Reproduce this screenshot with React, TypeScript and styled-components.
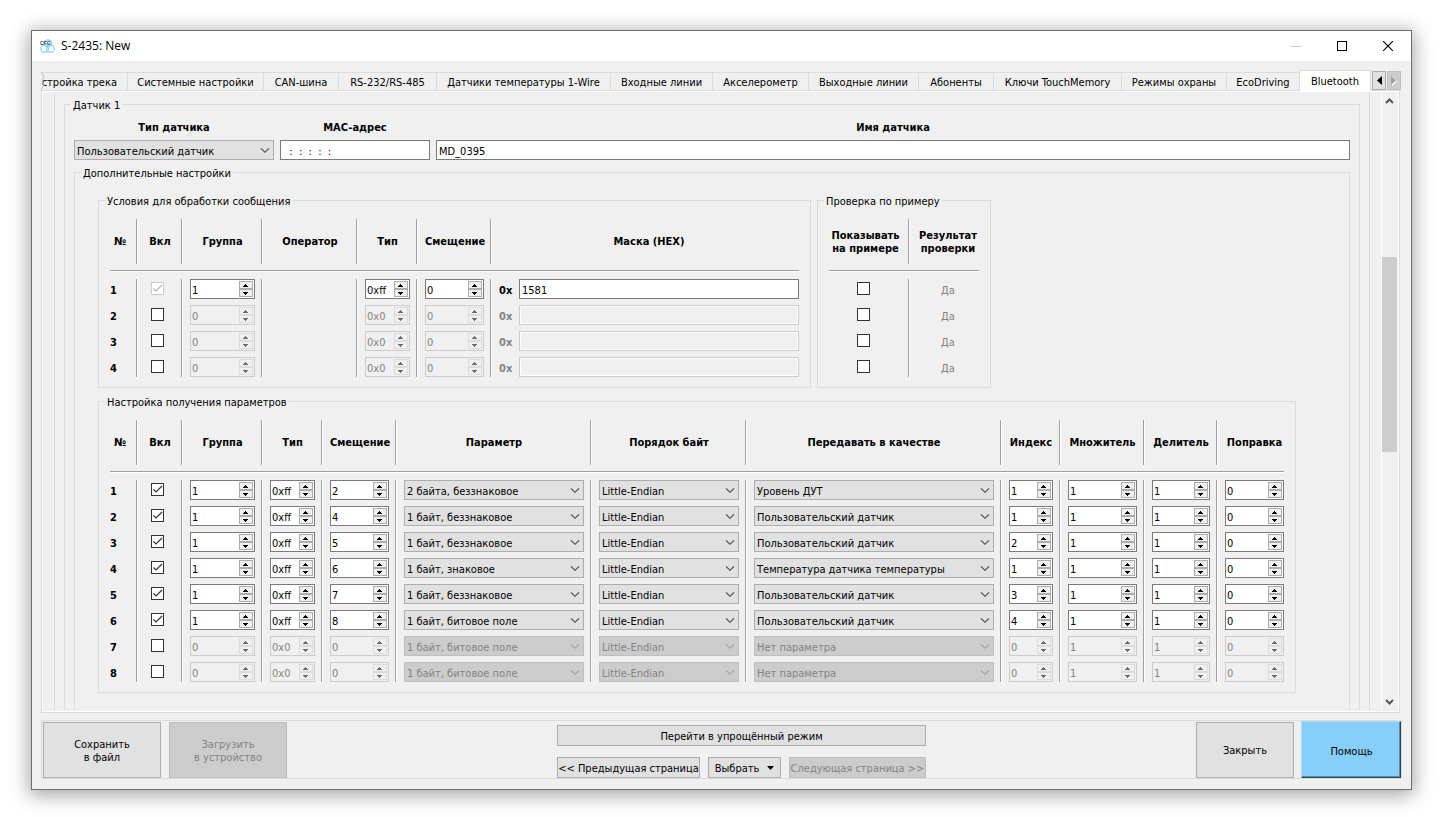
import React from 'react';
import styled, { createGlobalStyle, css } from 'styled-components';

const GlobalStyle = createGlobalStyle`
  *, *::before, *::after { box-sizing: border-box; }
  body {
    margin: 0;
    background: #fff;
    color: #000;
    font-family: "DejaVu Sans Condensed", "Noto Sans", sans-serif;
    font-size: 11px;
    line-height: 13px;
  }
  button, input, select { font: inherit; color: inherit; margin: 0; border-radius: 0; }
`;

const color = {
  face: '#f0f0f0',
  frame: '#dcdcdc',
  rule: '#a0a0a0',
  disabledText: '#838383',
};

/* ---------- window ---------- */

const Desktop = styled.div`
  min-height: 100vh;
  padding: 30px 28px 27px 31px;
  display: flex;
`;

const Window = styled.main`
  flex: 1;
  min-width: 0;
  display: flex;
  flex-direction: column;
  border: 1px solid #6e6e6e;
  background: ${color.face};
  box-shadow: 0 3px 18px 2px rgba(0, 0, 0, 0.36);
`;

const TitleBar = styled.header`
  height: 30px;
  display: flex;
  align-items: center;
  padding-left: 8px;
  background: #fff;
`;

const Title = styled.h1`
  margin: 0 0 0 6px;
  flex: 1;
  font: 12px/16px "Open Sans", "Noto Sans", sans-serif;
`;

const CaptionButton = styled.button`
  width: 46px;
  height: 30px;
  padding: 0;
  border: 0;
  background: none;
  display: grid;
  place-items: center;
`;

const Body = styled.div`
  flex: 1;
  min-height: 0;
  display: flex;
  flex-direction: column;
  padding: 9px 9px 10px;
`;

/* ---------- tabs ---------- */

const TabRow = styled.div`
  display: flex;
  height: 20px;
`;

const TabList = styled.div`
  position: relative;
  flex: 1;
  min-width: 0;
  display: flex;
  align-items: flex-end;
`;

const Tab = styled.button<{ $weight: number; $active?: boolean; $cut?: boolean }>`
  flex: ${p => p.$weight} ${p => p.$weight} ${p => p.$weight}px;
  min-width: 0;
  height: 18px;
  padding: 2px 0 0;
  white-space: nowrap;
  text-align: center;
  border: solid ${color.frame};
  border-width: 1px 0 0 1px;
  background: ${color.face};
  ${p => p.$cut && css`
    display: flex;
    justify-content: flex-end;
    align-items: center;
    padding-right: 10px;
    border-left: 0;
  `}
  ${p => p.$active && css`
    height: 21px;
    margin-bottom: -1px;
    padding-top: 1px;
    border-right-width: 1px;
    background: #fff;
    z-index: 1;
  `}
`;

const TornEdge = styled.svg`
  position: absolute;
  left: 0;
  bottom: 0;
`;

const TabScroll = styled.div`
  display: flex;
  gap: 1px;
  padding: 1px 1px 0;
`;

const ArrowButton = styled.button`
  width: 14px;
  height: 19px;
  padding: 0;
  display: grid;
  place-items: center;
  border: 1px solid #adadad;
  background: #e1e1e1;
  &:disabled { border-color: #bfbfbf; background: #ccc; }
`;

/* ---------- scrolled page ---------- */

const Pane = styled.section`
  flex: 1;
  display: flex;
  margin-right: 2px;
  border: 1px solid ${color.frame};
  box-shadow: inset 0 0 0 1px #fff;
  padding: 1px 1px 2px 1px;
`;

const PageView = styled.div`
  flex: 1;
  min-width: 0;
  display: flex;
  padding: 0 11px;
  overflow: hidden;
`;

const PageFrame = styled.div`
  flex: 1;
  min-width: 0;
  display: flex;
  padding: 5px 9px 0;
  border: solid ${color.frame};
  border-width: 0 1px;
`;

const ScrollBar = styled.div`
  width: 17px;
  display: flex;
  flex-direction: column;
  align-items: center;
  padding-right: 1px;
  border-left: 1px solid #fff;
`;

const ScrollButton = styled.button`
  width: 15px;
  height: 17px;
  padding: 0;
  border: 0;
  background: ${color.face};
  display: grid;
  place-items: center;
`;

const ScrollTrack = styled.div`
  flex: 1;
  width: 15px;
  display: grid;
  grid-template-rows: 148fr 195fr 241fr;
`;

const ScrollThumb = styled.div`
  grid-row: 2;
  background: #cdcdcd;
`;

/* ---------- group boxes ---------- */

const GroupBox = styled.fieldset<{ $open?: boolean }>`
  margin: 0;
  padding: 0;
  min-width: 0;
  border: 1px solid ${color.frame};
  ${p => p.$open && css`
    flex: 1;
    border-bottom: 0;
  `}
`;

const Legend = styled.legend`
  margin-left: 6px;
  padding: 2px 2px 0;
`;

const SensorContent = styled.div`
  height: 100%;
  display: flex;
  flex-direction: column;
  padding: 9px 9px 0;
`;

const ExtraContent = styled.div`
  display: flex;
  flex-direction: column;
  align-items: flex-start;
  gap: 6px;
  padding: 13px 23px 16px;
`;

const GroupRow = styled.div`
  display: flex;
  gap: 6px;
`;

const TableContent = styled.div`
  padding: 11px 11px 10px;
`;

const FieldRow = styled.div`
  display: grid;
  grid-template-columns: 200px 150px 1fr;
  gap: 6px;
  margin-bottom: 5px;
`;

const Field = styled.label`
  display: flex;
  flex-direction: column;
  gap: 6px;
`;

const FieldLabel = styled.span`
  font-weight: bold;
  text-align: center;
`;

/* ---------- controls ---------- */

const TextBox = styled.input`
  width: 100%;
  height: 20px;
  padding: 2px 2px 0;
  border: 1px solid #7a7a7a;
  background: #fff;
  white-space: pre;
  outline: 0;
  &:disabled {
    border-color: #ccc;
    background: ${color.face};
    box-shadow: inset 0 0 0 1px #fff;
  }
`;

const ComboFrame = styled.span`
  display: grid;
  align-items: center;
  justify-items: end;
  & > * { grid-area: 1 / 1; }
  & > svg { margin-right: 4px; pointer-events: none; }
`;

const ComboSelect = styled.select`
  appearance: none;
  width: 100%;
  height: 20px;
  padding: 2px 18px 0 2px;
  border: 1px solid #adadad;
  background: #e1e1e1;
  outline: 0;
  &:disabled {
    border-color: #bfbfbf;
    background: #ccc;
    color: ${color.disabledText};
    opacity: 1;
  }
`;

const SpinFrame = styled.span<{ $off?: boolean }>`
  display: flex;
  height: 20px;
  padding: 1px;
  border: 1px solid ${p => (p.$off ? '#ccc' : '#7a7a7a')};
  background: ${p => (p.$off ? color.face : '#fff')};
  color: ${p => (p.$off ? color.disabledText : '#000')};
`;

const SpinInput = styled.input`
  flex: 1;
  width: 0;
  min-width: 0;
  padding: 2px 0 0;
  border: 0;
  background: none;
  outline: 0;
`;

const SpinButtons = styled.span`
  width: 14px;
  display: grid;
  grid-template-rows: 8px 8px;
`;

const SpinButton = styled.button<{ $off?: boolean }>`
  padding: 0;
  display: grid;
  place-items: center;
  border: 1px solid ${p => (p.$off ? '#dcdcdc' : '#acacac')};
  background: ${color.face};
  color: ${p => (p.$off ? '#6d6d6d' : '#000')};
`;

const CheckBox = styled.input`
  appearance: none;
  display: block;
  width: 13px;
  height: 13px;
  border: 1px solid #333;
  background: #fff;
  &:disabled { border-color: #ccc; }
`;

const CheckFrame = styled.span`
  display: grid;
  width: 13px;
  height: 13px;
  & > * { grid-area: 1 / 1; }
  & > svg { pointer-events: none; }
`;

/* ---------- settings tables ---------- */

const Grid = styled.table`
  border-collapse: separate;
  border-spacing: 0;
  table-layout: fixed;
  width: min-content;
`;

const cell = css`
  padding: 0 6px 0 8px;
  border-left: 1px solid ${color.rule};
  box-shadow: inset 1px 0 #fff;
  &:first-child { border-left: 0; box-shadow: none; padding-left: 0; }
  &:last-child { padding-right: 0; }
`;

const HeadCell = styled.th`
  ${cell}
  height: 45px;
  text-align: center;
  vertical-align: middle;
  white-space: pre;
`;

const RuleCell = styled.td`
  height: 15px;
  padding: 6px 0 7px;
`;

const Rule = styled.div`
  height: 2px;
  border-top: 1px solid ${color.rule};
  border-bottom: 1px solid #fff;
`;

const BodyRow = styled.tr`
  height: 26px;
  &:last-child { height: 20px; }
`;

const Cell = styled.td`
  ${cell}
  vertical-align: top;
`;

const CellBox = styled.div<{ $align?: 'start' | 'center' }>`
  height: 20px;
  display: flex;
  align-items: center;
  justify-content: ${p => p.$align ?? 'stretch'};
  gap: 6px;
`;

const CheckCellBox = styled(CellBox)`
  padding: 0 10px 1px 6px;
`;

const RowNumber = styled.span`
  padding-top: 2px;
  font-weight: bold;
`;

const Prefix = styled.b<{ $off?: boolean }>`
  flex: 0 0 14px;
  padding-top: 2px;
  color: ${p => (p.$off ? color.disabledText : '#000')};
`;

const Verdict = styled.span`
  padding-top: 2px;
  color: ${color.disabledText};
`;

/* ---------- footer ---------- */

const Footer = styled.footer`
  display: flex;
  justify-content: space-between;
  align-items: flex-end;
  height: 59px;
  margin-top: 7px;
  padding-left: 1px;
  border: 1px solid ${color.frame};
`;

const ButtonRow = styled.div`
  display: flex;
  align-items: flex-end;
  gap: 8px;
`;

const EndButtons = styled(ButtonRow)`
  gap: 7px;
`;

const NavBlock = styled.nav`
  display: flex;
  flex-direction: column;
  gap: 11px;
`;

const PushButton = styled.button<{ $width?: number; $tall?: boolean }>`
  width: ${p => (p.$width ? `${p.$width}px` : 'auto')};
  height: ${p => (p.$tall ? 56 : 21)}px;
  padding: 1px 0 0;
  display: flex;
  align-items: center;
  justify-content: center;
  gap: 8px;
  white-space: pre;
  text-align: center;
  border: 1px solid #adadad;
  background: #e1e1e1;
  &:disabled { border-color: #bfbfbf; background: #ccc; color: ${color.disabledText}; }
`;

const HelpButton = styled.button`
  width: 100px;
  height: 57px;
  padding: 3px 0 0 1px;
  border: 1px solid;
  border-color: #a9dcfb #27465a #27465a #a9dcfb;
  background: #87cefa;
  box-shadow: inset -1px -1px #5b8ba9;
`;

/* ---------- glyphs ---------- */

const AppIcon = () => (
  <svg width="15" height="15" viewBox="0 0 15 15" aria-hidden="true">
    <g fill="none" stroke="#8ccdf3" strokeWidth="1.2">
      <circle cx="8" cy="4.4" r="3.6" fill="#eaf6fd" />
      <circle cx="4.6" cy="9.6" r="3.8" />
      <circle cx="10.4" cy="9.6" r="3.8" />
    </g>
    <text x="0" y="6" fontSize="5" fontWeight="bold" fontFamily="Liberation Sans, sans-serif" fill="#444">CFG</text>
  </svg>
);

const Chevron = ({ off }: { off?: boolean }) => (
  <svg width="10" height="8" viewBox="0 0 10 8" aria-hidden="true">
    <path d="M1 2.3 5 6.3 9 2.3" fill="none" stroke={off ? '#a3a3a3' : '#444'} strokeWidth="1.1" />
  </svg>
);

const SpinArrow = ({ down }: { down?: boolean }) => (
  <svg width="6" height="3" viewBox="0 0 6 3" shapeRendering="crispEdges" aria-hidden="true">
    <path d={down ? 'M0 0h5v1H4v1H3v1H2V2H1V1H0z' : 'M0 3h5V2H4V1H3V0H2v1H1v1H0z'} fill="currentColor" />
  </svg>
);

const ScrollArrow = ({ down }: { down?: boolean }) => (
  <svg width="9" height="6" viewBox="0 0 9 6" aria-hidden="true">
    <path d={down ? 'M1 1 4.5 4.5 8 1' : 'M1 5 4.5 1.5 8 5'} fill="none" stroke="#555" strokeWidth="2" />
  </svg>
);

/* ---------- composed controls ---------- */

function Spin({ value, off, label }: { value: string; off?: boolean; label: string }) {
  return (
    <SpinFrame $off={off}>
      <SpinInput type="text" defaultValue={value} disabled={off} aria-label={label} />
      <SpinButtons>
        <SpinButton $off={off} disabled={off} aria-label={`${label} +`}><SpinArrow /></SpinButton>
        <SpinButton $off={off} disabled={off} aria-label={`${label} −`}><SpinArrow down /></SpinButton>
      </SpinButtons>
    </SpinFrame>
  );
}

function Combo({ value, off, label }: { value: string; off?: boolean; label: string }) {
  return (
    <ComboFrame>
      <ComboSelect defaultValue={value} disabled={off} aria-label={label}>
        <option>{value}</option>
      </ComboSelect>
      <Chevron off={off} />
    </ComboFrame>
  );
}

function Check({ checked, off, label }: { checked?: boolean; off?: boolean; label: string }) {
  const [on, setOn] = React.useState(!!checked);
  return (
    <CheckFrame>
      <CheckBox type="checkbox" checked={on} disabled={off} aria-label={label} onChange={e => setOn(e.target.checked)} />
      {on && (
        <svg width="13" height="13" viewBox="0 0 13 13" aria-hidden="true">
          <path d="M2.5 6.5 5 9 11 3" fill="none" stroke={off ? '#b4b4b4' : '#333'} strokeWidth="1.2" />
        </svg>
      )}
    </CheckFrame>
  );
}

function TableHead({ columns }: { columns: [string, number][] }) {
  return (
    <>
      <colgroup>{columns.map(([name, width]) => <col key={name} width={width} />)}</colgroup>
      <thead>
        <tr>{columns.map(([name]) => <HeadCell key={name} scope="col">{name}</HeadCell>)}</tr>
        <tr aria-hidden="true"><RuleCell colSpan={columns.length}><Rule /></RuleCell></tr>
      </thead>
    </>
  );
}

/* ---------- data ---------- */

const tabs: [string, number][] = [
  ['стройка трека', 86], ['Системные настройки', 136], ['CAN-шина', 75], ['RS-232/RS-485', 98],
  ['Датчики температуры 1-Wire', 174], ['Входные линии', 102], ['Акселерометр', 96],
  ['Выходные линии', 110], ['Абоненты', 75], ['Ключи TouchMemory', 128], ['Режимы охраны', 105],
  ['EcoDriving', 73], ['Bluetooth', 72],
];

const conditionColumns: [string, number][] = [
  ['№', 26], ['Вкл', 45], ['Группа', 80], ['Оператор', 95], ['Тип', 60], ['Смещение', 74], ['Маска (HEX)', 309],
];

const conditions = [
  { group: '1', type: '0xff', mask: '1581', first: true },
  { group: '0', type: '0x0', mask: '' },
  { group: '0', type: '0x0', mask: '' },
  { group: '0', type: '0x0', mask: '' },
];

const probeColumns: [string, number][] = [['Показывать\nна примере', 79], ['Результат\nпроверки', 71]];

const paramColumns: [string, number][] = [
  ['№', 26], ['Вкл', 45], ['Группа', 80], ['Тип', 60], ['Смещение', 74], ['Параметр', 195],
  ['Порядок байт', 155], ['Передавать в качестве', 255], ['Индекс', 59], ['Множитель', 84],
  ['Делитель', 73], ['Поправка', 68],
];

const params = [
  { offset: '2', kind: '2 байта, беззнаковое', target: 'Уровень ДУТ', index: '1' },
  { offset: '4', kind: '1 байт, беззнаковое', target: 'Пользовательский датчик', index: '1' },
  { offset: '5', kind: '1 байт, беззнаковое', target: 'Пользовательский датчик', index: '2' },
  { offset: '6', kind: '1 байт, знаковое', target: 'Температура датчика температуры', index: '1' },
  { offset: '7', kind: '1 байт, беззнаковое', target: 'Пользовательский датчик', index: '3' },
  { offset: '8', kind: '1 байт, битовое поле', target: 'Пользовательский датчик', index: '4' },
  { offset: '0', kind: '1 байт, битовое поле', target: 'Нет параметра', index: '0', off: true },
  { offset: '0', kind: '1 байт, битовое поле', target: 'Нет параметра', index: '0', off: true },
];

/* ---------- sections ---------- */

function ConditionsTable() {
  return (
    <Grid>
      <TableHead columns={conditionColumns} />
      <tbody>
        {conditions.map((c, i) => {
          const off = !c.first;
          return (
            <BodyRow key={i}>
              <Cell><CellBox $align="start"><RowNumber>{i + 1}</RowNumber></CellBox></Cell>
              <Cell><CheckCellBox $align="start"><Check checked={c.first} off={c.first} label="Вкл" /></CheckCellBox></Cell>
              <Cell><Spin value={c.group} off={off} label="Группа" /></Cell>
              <Cell />
              <Cell><Spin value={c.type} off={off} label="Тип" /></Cell>
              <Cell><Spin value="0" off={off} label="Смещение" /></Cell>
              <Cell>
                <CellBox>
                  <Prefix $off={off}>0x</Prefix>
                  <TextBox type="text" defaultValue={c.mask} disabled={off} aria-label="Маска (HEX)" />
                </CellBox>
              </Cell>
            </BodyRow>
          );
        })}
      </tbody>
    </Grid>
  );
}

function ProbeTable() {
  return (
    <Grid>
      <TableHead columns={probeColumns} />
      <tbody>
        {conditions.map((_, i) => (
          <BodyRow key={i}>
            <Cell><CheckCellBox $align="center"><Check label="Показывать на примере" /></CheckCellBox></Cell>
            <Cell><CellBox $align="center"><Verdict>Да</Verdict></CellBox></Cell>
          </BodyRow>
        ))}
      </tbody>
    </Grid>
  );
}

function ParamsTable() {
  return (
    <Grid>
      <TableHead columns={paramColumns} />
      <tbody>
        {params.map((p, i) => (
          <BodyRow key={i}>
            <Cell><CellBox $align="start"><RowNumber>{i + 1}</RowNumber></CellBox></Cell>
            <Cell><CheckCellBox $align="start"><Check checked={!p.off} label="Вкл" /></CheckCellBox></Cell>
            <Cell><Spin value={p.off ? '0' : '1'} off={p.off} label="Группа" /></Cell>
            <Cell><Spin value={p.off ? '0x0' : '0xff'} off={p.off} label="Тип" /></Cell>
            <Cell><Spin value={p.offset} off={p.off} label="Смещение" /></Cell>
            <Cell><Combo value={p.kind} off={p.off} label="Параметр" /></Cell>
            <Cell><Combo value="Little-Endian" off={p.off} label="Порядок байт" /></Cell>
            <Cell><Combo value={p.target} off={p.off} label="Передавать в качестве" /></Cell>
            <Cell><Spin value={p.index} off={p.off} label="Индекс" /></Cell>
            <Cell><Spin value="1" off={p.off} label="Множитель" /></Cell>
            <Cell><Spin value="1" off={p.off} label="Делитель" /></Cell>
            <Cell><Spin value="0" off={p.off} label="Поправка" /></Cell>
          </BodyRow>
        ))}
      </tbody>
    </Grid>
  );
}

function SensorGroup() {
  return (
    <GroupBox $open>
      <Legend>Датчик 1</Legend>
      <SensorContent>
        <FieldRow>
          <Field>
            <FieldLabel>Тип датчика</FieldLabel>
            <Combo value="Пользовательский датчик" label="Тип датчика" />
          </Field>
          <Field>
            <FieldLabel>MAC-адрес</FieldLabel>
            <TextBox type="text" defaultValue="  :  :  :  :  :  " />
          </Field>
          <Field>
            <FieldLabel>Имя датчика</FieldLabel>
            <TextBox type="text" defaultValue="MD_0395" />
          </Field>
        </FieldRow>
        <GroupBox $open>
          <Legend>Дополнительные настройки</Legend>
          <ExtraContent>
            <GroupRow>
              <GroupBox>
                <Legend>Условия для обработки сообщения</Legend>
                <TableContent><ConditionsTable /></TableContent>
              </GroupBox>
              <GroupBox>
                <Legend>Проверка по примеру</Legend>
                <TableContent><ProbeTable /></TableContent>
              </GroupBox>
            </GroupRow>
            <GroupBox>
              <Legend>Настройка получения параметров</Legend>
              <TableContent><ParamsTable /></TableContent>
            </GroupBox>
          </ExtraContent>
        </GroupBox>
      </SensorContent>
    </GroupBox>
  );
}

export default function App() {
  return (
    <>
      <GlobalStyle />
      <Desktop>
        <Window>
          <TitleBar>
            <AppIcon />
            <Title>S-2435: New</Title>
            <CaptionButton aria-label="Свернуть" disabled>
              <svg width="10" height="11" shapeRendering="crispEdges"><path d="M0 5.5h10" stroke="#c8c8c8" /></svg>
            </CaptionButton>
            <CaptionButton aria-label="Развернуть">
              <svg width="10" height="10" shapeRendering="crispEdges"><path d="M.5.5h9v9h-9z" fill="none" stroke="#000" /></svg>
            </CaptionButton>
            <CaptionButton aria-label="Закрыть окно">
              <svg width="10" height="10"><path d="M0 0 10 10M10 0 0 10" stroke="#000" strokeWidth="1.1" /></svg>
            </CaptionButton>
          </TitleBar>
          <Body>
            <TabRow>
              <TabList role="tablist">
                {tabs.map(([name, weight], i) => (
                  <Tab
                    key={name}
                    role="tab"
                    $weight={weight}
                    $cut={i === 0}
                    $active={i === tabs.length - 1}
                    aria-selected={i === tabs.length - 1}
                  >
                    {name}
                  </Tab>
                ))}
                <TornEdge width="4" height="18" viewBox="0 0 4 18" aria-hidden="true">
                  <path d="M0 0 3 4 1 9 3 13 0 18" fill="none" stroke="#bdbdbd" />
                </TornEdge>
              </TabList>
              <TabScroll>
                <ArrowButton aria-label="Предыдущие вкладки">
                  <svg width="5" height="9"><path d="M5 0v9L0 4.5z" /></svg>
                </ArrowButton>
                <ArrowButton aria-label="Следующие вкладки" disabled>
                  <svg width="6" height="10"><path d="M1 1v9l5-5z" fill="#fff" /><path d="M0 0v9l5-4.500z" fill="#a0a0a0" /></svg>
                </ArrowButton>
              </TabScroll>
            </TabRow>
            <Pane>
              <PageView>
                <PageFrame><SensorGroup /></PageFrame>
              </PageView>
              <ScrollBar>
                <ScrollButton aria-label="Вверх"><ScrollArrow /></ScrollButton>
                <ScrollTrack><ScrollThumb /></ScrollTrack>
                <ScrollButton aria-label="Вниз"><ScrollArrow down /></ScrollButton>
              </ScrollBar>
            </Pane>
            <Footer>
              <ButtonRow>
                <PushButton $width={118} $tall>{'Сохранить\nв файл'}</PushButton>
                <PushButton $width={118} $tall disabled>{'Загрузить\nв устройство'}</PushButton>
              </ButtonRow>
              <NavBlock>
                <PushButton>Перейти в упрощённый режим</PushButton>
                <ButtonRow>
                  <PushButton $width={143}>{'<< Предыдущая страница'}</PushButton>
                  <PushButton $width={73}>
                    Выбрать
                    <svg width="7" height="4" aria-hidden="true"><path d="M0 0h7L3.5 4z" /></svg>
                  </PushButton>
                  <PushButton $width={137} disabled>{'Следующая страница >>'}</PushButton>
                </ButtonRow>
              </NavBlock>
              <EndButtons>
                <PushButton $width={98} $tall>Закрыть</PushButton>
                <HelpButton>Помощь</HelpButton>
              </EndButtons>
            </Footer>
          </Body>
        </Window>
      </Desktop>
    </>
  );
}
